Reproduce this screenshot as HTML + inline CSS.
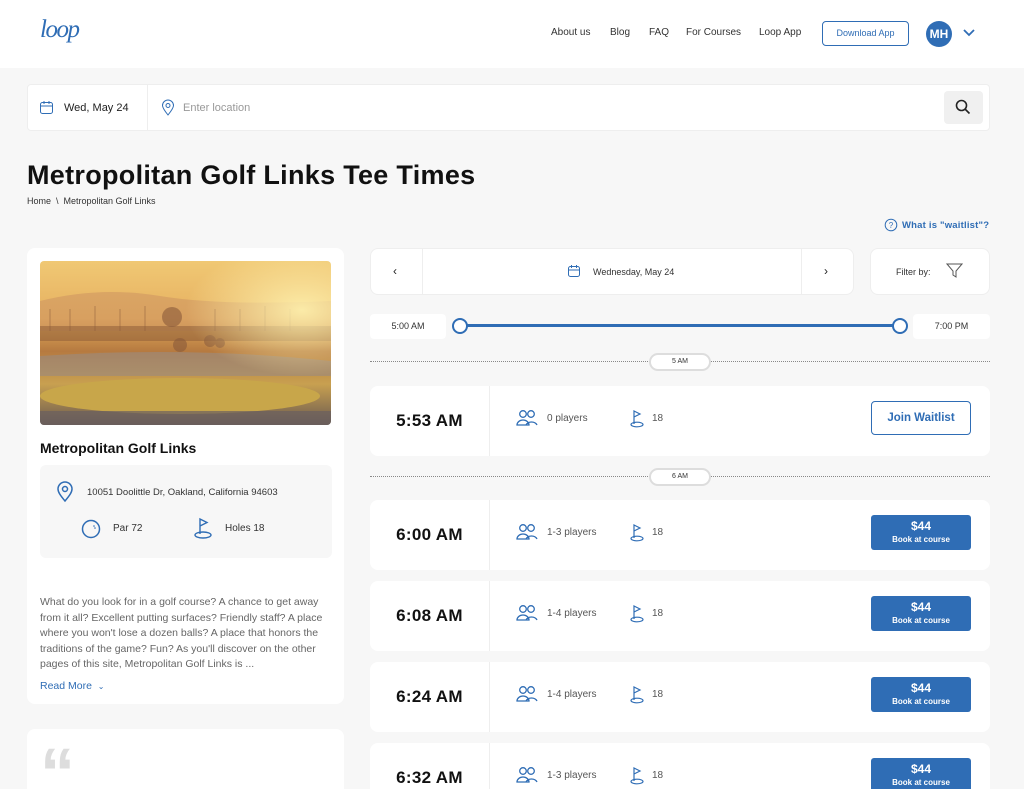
<!DOCTYPE html>
<html><head><meta charset="utf-8"><style>
*{box-sizing:border-box;margin:0;padding:0}
html,body{width:1024px;height:789px;overflow:hidden}
body{background:#f7f7f7;font-family:"Liberation Sans",sans-serif;color:#222;position:relative}
.abs{position:absolute}
.hdr{left:0;top:0;width:1024px;height:68px;background:#fff}
.nav{font-size:10px;color:#333;top:27px}
.card{background:#fff;border-radius:8px}
.blue{color:#2f6db5}
.row{left:370px;width:620px;height:70px;background:#fff;border-radius:8px}
.row .t{position:absolute;left:0;top:0;width:120px;height:70px;border-right:1px solid #eee;font-size:17px;font-weight:bold;color:#111;text-align:center;line-height:70px;letter-spacing:.3px}
.row .p{position:absolute;left:177px;top:27px;font-size:10px;color:#555}
.row .h{position:absolute;left:282px;top:27px;font-size:10px;color:#555}
.row .ic1{position:absolute;left:146px;top:23px}
.row .ic2{position:absolute;left:259px;top:23px}
.btn{position:absolute;left:501px;top:15px;width:100px;height:35px;background:#2f6db5;border-radius:3px;color:#fff;text-align:center}
.btn b{display:block;font-size:12px;margin-top:4px}
.btn span{display:block;font-size:8px;font-weight:bold;margin-top:2px}
.div{left:370px;width:620px;border-top:1.5px dotted #888}
.pill{width:62px;height:18px;border:2px solid #ddd;border-radius:9px;background:#fff;font-size:7px;text-align:center;line-height:14px;color:#333}
</style></head><body>
<div class="abs hdr"></div>
<div class="abs blue" style="left:40px;top:16px;font-family:'Liberation Serif',serif;font-style:italic;font-size:25px;letter-spacing:-1.5px">loop</div>
<div class="abs nav" style="left:551px">About us</div>
<div class="abs nav" style="left:610px">Blog</div>
<div class="abs nav" style="left:649px">FAQ</div>
<div class="abs nav" style="left:686px">For Courses</div>
<div class="abs nav" style="left:759px">Loop App</div>
<div class="abs blue" style="left:822px;top:21px;width:87px;height:25px;border:1px solid #2f6db5;border-radius:4px;font-size:9px;text-align:center;line-height:23px">Download App</div>
<div class="abs" style="left:926px;top:21px;width:26px;height:26px;border-radius:50%;background:#2f6db5;color:#fff;font-size:12px;font-weight:bold;text-align:center;line-height:26px">MH</div>
<svg class="abs" style="left:963px;top:29px" width="12" height="8"><path d="M1 1l5 5 5-5" stroke="#2f6db5" stroke-width="1.8" fill="none"/></svg>

<div class="abs card" style="left:27px;top:84px;width:963px;height:47px;border:1px solid #eee;border-radius:4px"></div>
<div class="abs" style="left:147px;top:85px;width:1px;height:45px;background:#eee"></div>
<svg class="abs" style="left:39px;top:100px" width="15" height="15"><rect x="1.5" y="2.5" width="12" height="11" rx="2" stroke="#2f6db5" fill="none"/><path d="M1.5 6h12M5 1v3M10 1v3" stroke="#2f6db5"/></svg>
<div class="abs" style="left:64px;top:102px;font-size:11px">Wed, May 24</div>
<svg class="abs" style="left:161px;top:99px" width="14" height="17"><path d="M7 16C3 11 1.5 8.5 1.5 6.5a5.5 5.5 0 0111 0C12.5 8.5 11 11 7 16z" stroke="#2f6db5" fill="none"/><circle cx="7" cy="6.5" r="2" stroke="#2f6db5" fill="none"/></svg>
<div class="abs" style="left:183px;top:102px;font-size:11px;color:#999">Enter location</div>
<div class="abs" style="left:944px;top:91px;width:39px;height:33px;background:#f0f0f0;border-radius:4px"></div>
<svg class="abs" style="left:955px;top:99px" width="16" height="16"><circle cx="6.5" cy="6.5" r="5" stroke="#222" stroke-width="1.6" fill="none"/><path d="M10 10l4.5 4.5" stroke="#222" stroke-width="1.6"/></svg>

<div class="abs" style="left:27px;top:160px;font-size:27px;font-weight:bold;color:#111;letter-spacing:.3px">Metropolitan Golf Links Tee Times</div>
<div class="abs" style="left:27px;top:196px;font-size:9px;color:#333">Home &nbsp;\ &nbsp;Metropolitan Golf Links</div>
<svg class="abs" style="left:884px;top:218px" width="14" height="14"><circle cx="7" cy="7" r="5.8" stroke="#2f6db5" fill="none"/><text x="7" y="10" font-size="8" fill="#2f6db5" text-anchor="middle" font-family="Liberation Sans">?</text></svg>
<div class="abs blue" style="left:902px;top:220px;font-size:9.5px;font-weight:bold;letter-spacing:.2px">What is "waitlist"?</div>

<div class="abs card" style="left:27px;top:248px;width:317px;height:456px"></div>
<svg class="abs" style="left:40px;top:261px;border-radius:4px" width="291" height="164" viewBox="0 0 291 164">
<defs><linearGradient id="s" x1="0" y1="0" x2="0" y2="1"><stop offset="0" stop-color="#f0c874"/><stop offset=".35" stop-color="#e6b060"/><stop offset=".55" stop-color="#b67a40"/><stop offset=".75" stop-color="#c8a050"/><stop offset="1" stop-color="#6a5a50"/></linearGradient>
<radialGradient id="r" cx=".9" cy=".3" r=".4"><stop offset="0" stop-color="#fff3b0" stop-opacity=".9"/><stop offset="1" stop-color="#fff3b0" stop-opacity="0"/></radialGradient></defs>
<rect width="291" height="164" fill="url(#s)"/>
<path d="M0 40Q60 25 120 35T291 40V70H0z" fill="#c99060" opacity=".5"/>
<path d="M0 65H291V80H0z" fill="#8a5a35" opacity=".5"/>
<g fill="#8a5a3a" opacity=".6"><circle cx="132" cy="56" r="10"/><circle cx="170" cy="80" r="6"/><circle cx="180" cy="82" r="5"/><circle cx="140" cy="84" r="7"/></g>
<g stroke="#8a5a3a" opacity=".5"><path d="M10 48V70M30 48V70M55 45V70M80 48V70M105 45V70M175 48V70M200 48V70M225 45V70M250 48V70"/></g>
<path d="M0 95Q150 85 291 100V115H0z" fill="#9a8a80" opacity=".6"/>
<ellipse cx="140" cy="135" rx="140" ry="18" fill="#c8a64a"/>
<path d="M0 150H291V164H0z" fill="#6a6060" opacity=".7"/>
<rect width="291" height="164" fill="url(#r)"/>
</svg>
<div class="abs" style="left:40px;top:440px;font-size:14px;font-weight:bold;color:#111">Metropolitan Golf Links</div>
<div class="abs" style="left:40px;top:465px;width:292px;height:93px;background:#f7f7f7;border-radius:6px"></div>
<svg class="abs" style="left:56px;top:481px" width="18" height="22"><path d="M9 20C4 14 2 11 2 8a7 7 0 0114 0c0 3-2 6-7 12z" stroke="#2f6db5" stroke-width="1.5" fill="none"/><circle cx="9" cy="8" r="2.5" stroke="#2f6db5" stroke-width="1.5" fill="none"/></svg>
<div class="abs" style="left:87px;top:487px;font-size:9.5px;color:#333">10051 Doolittle Dr, Oakland, California 94603</div>
<svg class="abs" style="left:81px;top:519px" width="20" height="20"><circle cx="10" cy="10" r="8.5" stroke="#2f6db5" stroke-width="1.5" fill="none"/><circle cx="13" cy="7" r=".8" fill="#2f6db5"/><circle cx="14" cy="9" r=".8" fill="#2f6db5"/></svg>
<div class="abs" style="left:113px;top:523px;font-size:10px;color:#333">Par 72</div>
<svg class="abs" style="left:193px;top:517px" width="20" height="22"><path d="M7 17V2l7 3.5-7 3.5" stroke="#2f6db5" stroke-width="1.4" fill="none"/><ellipse cx="10" cy="18" rx="8" ry="3" stroke="#2f6db5" stroke-width="1.4" fill="none"/></svg>
<div class="abs" style="left:225px;top:523px;font-size:10px;color:#333">Holes 18</div>
<div class="abs" style="left:40px;top:595px;width:292px;font-size:10.5px;line-height:15.5px;color:#666">What do you look for in a golf course? A chance to get away from it all? Excellent putting surfaces? Friendly staff? A place where you won't lose a dozen balls? A place that honors the traditions of the game? Fun? As you'll discover on the other pages of this site, Metropolitan Golf Links is ...</div>
<div class="abs blue" style="left:40px;top:680px;font-size:10.5px">Read More &nbsp;<span style="font-size:8px">⌄</span></div>
<div class="abs card" style="left:27px;top:729px;width:317px;height:80px"></div>
<div class="abs" style="left:40px;top:738px;font-size:70px;font-weight:bold;color:#ddd;line-height:70px">“</div>

<div class="abs card" style="left:370px;top:248px;width:484px;height:47px;border:1px solid #eee"></div>
<div class="abs" style="left:422px;top:249px;width:1px;height:45px;background:#eee"></div>
<div class="abs" style="left:801px;top:249px;width:1px;height:45px;background:#eee"></div>
<div class="abs" style="left:393px;top:264px;font-size:12px">‹</div>
<div class="abs" style="left:824px;top:264px;font-size:12px">›</div>
<svg class="abs" style="left:567px;top:264px" width="14" height="14"><rect x="1.5" y="2.5" width="11" height="10" rx="2" stroke="#2f6db5" fill="none"/><path d="M1.5 6h11M4.5 1v3M9.5 1v3" stroke="#2f6db5"/></svg>
<div class="abs" style="left:593px;top:267px;font-size:9px;color:#333">Wednesday, May 24</div>
<div class="abs card" style="left:870px;top:248px;width:120px;height:47px;border:1px solid #eee"></div>
<div class="abs" style="left:896px;top:267px;font-size:9px;color:#333">Filter by:</div>
<svg class="abs" style="left:946px;top:263px" width="17" height="16"><path d="M1 1h15l-6 7v6l-3-2V8z" stroke="#555" fill="none"/></svg>

<div class="abs card" style="left:370px;top:314px;width:76px;height:25px;border-radius:4px;font-size:9px;text-align:center;line-height:25px;color:#333">5:00 AM</div>
<div class="abs card" style="left:913px;top:314px;width:77px;height:25px;border-radius:4px;font-size:9px;text-align:center;line-height:25px;color:#333">7:00 PM</div>
<div class="abs" style="left:460px;top:324px;width:440px;height:3px;background:#2f6db5"></div>
<div class="abs" style="left:452px;top:318px;width:16px;height:16px;border-radius:50%;border:2.5px solid #2f6db5;background:#fff"></div>
<div class="abs" style="left:892px;top:318px;width:16px;height:16px;border-radius:50%;border:2.5px solid #2f6db5;background:#fff"></div>

<div class="abs div" style="top:361px"></div>
<div class="abs pill" style="left:649px;top:353px">5 AM</div>
<div class="abs row" style="top:386px"><div class="t">5:53 AM</div>
<svg class="ic1" width="22" height="18"><circle cx="7" cy="5" r="3.3" stroke="#2f6db5" stroke-width="1.3" fill="none"/><circle cx="15" cy="5" r="3.3" stroke="#2f6db5" stroke-width="1.3" fill="none"/><path d="M1 16a6 5 0 0112 0zM10 16a6 5 0 0111 0" stroke="#2f6db5" stroke-width="1.3" fill="none"/></svg>
<div class="p">0 players</div>
<svg class="ic2" width="16" height="19"><path d="M5 15V2l6 3-6 3" stroke="#2f6db5" stroke-width="1.2" fill="none"/><ellipse cx="8" cy="15.5" rx="6" ry="2.3" stroke="#2f6db5" stroke-width="1.2" fill="none"/></svg>
<div class="h">18</div>
<div class="abs blue" style="left:501px;top:15px;width:100px;height:34px;border:1px solid #2f6db5;border-radius:4px;font-size:11.5px;font-weight:bold;text-align:center;line-height:32px">Join Waitlist</div></div>

<div class="abs div" style="top:476px"></div>
<div class="abs pill" style="left:649px;top:468px">6 AM</div>

<div class="abs row" style="top:500px"><div class="t">6:00 AM</div>
<svg class="ic1" width="22" height="18"><circle cx="7" cy="5" r="3.3" stroke="#2f6db5" stroke-width="1.3" fill="none"/><circle cx="15" cy="5" r="3.3" stroke="#2f6db5" stroke-width="1.3" fill="none"/><path d="M1 16a6 5 0 0112 0zM10 16a6 5 0 0111 0" stroke="#2f6db5" stroke-width="1.3" fill="none"/></svg>
<div class="p">1-3 players</div>
<svg class="ic2" width="16" height="19"><path d="M5 15V2l6 3-6 3" stroke="#2f6db5" stroke-width="1.2" fill="none"/><ellipse cx="8" cy="15.5" rx="6" ry="2.3" stroke="#2f6db5" stroke-width="1.2" fill="none"/></svg>
<div class="h">18</div><div class="btn"><b>$44</b><span>Book at course</span></div></div>

<div class="abs row" style="top:581px"><div class="t">6:08 AM</div>
<svg class="ic1" width="22" height="18"><circle cx="7" cy="5" r="3.3" stroke="#2f6db5" stroke-width="1.3" fill="none"/><circle cx="15" cy="5" r="3.3" stroke="#2f6db5" stroke-width="1.3" fill="none"/><path d="M1 16a6 5 0 0112 0zM10 16a6 5 0 0111 0" stroke="#2f6db5" stroke-width="1.3" fill="none"/></svg>
<div class="p">1-4 players</div>
<svg class="ic2" width="16" height="19"><path d="M5 15V2l6 3-6 3" stroke="#2f6db5" stroke-width="1.2" fill="none"/><ellipse cx="8" cy="15.5" rx="6" ry="2.3" stroke="#2f6db5" stroke-width="1.2" fill="none"/></svg>
<div class="h">18</div><div class="btn"><b>$44</b><span>Book at course</span></div></div>

<div class="abs row" style="top:662px"><div class="t">6:24 AM</div>
<svg class="ic1" width="22" height="18"><circle cx="7" cy="5" r="3.3" stroke="#2f6db5" stroke-width="1.3" fill="none"/><circle cx="15" cy="5" r="3.3" stroke="#2f6db5" stroke-width="1.3" fill="none"/><path d="M1 16a6 5 0 0112 0zM10 16a6 5 0 0111 0" stroke="#2f6db5" stroke-width="1.3" fill="none"/></svg>
<div class="p">1-4 players</div>
<svg class="ic2" width="16" height="19"><path d="M5 15V2l6 3-6 3" stroke="#2f6db5" stroke-width="1.2" fill="none"/><ellipse cx="8" cy="15.5" rx="6" ry="2.3" stroke="#2f6db5" stroke-width="1.2" fill="none"/></svg>
<div class="h">18</div><div class="btn"><b>$44</b><span>Book at course</span></div></div>

<div class="abs row" style="top:743px"><div class="t">6:32 AM</div>
<svg class="ic1" width="22" height="18"><circle cx="7" cy="5" r="3.3" stroke="#2f6db5" stroke-width="1.3" fill="none"/><circle cx="15" cy="5" r="3.3" stroke="#2f6db5" stroke-width="1.3" fill="none"/><path d="M1 16a6 5 0 0112 0zM10 16a6 5 0 0111 0" stroke="#2f6db5" stroke-width="1.3" fill="none"/></svg>
<div class="p">1-3 players</div>
<svg class="ic2" width="16" height="19"><path d="M5 15V2l6 3-6 3" stroke="#2f6db5" stroke-width="1.2" fill="none"/><ellipse cx="8" cy="15.5" rx="6" ry="2.3" stroke="#2f6db5" stroke-width="1.2" fill="none"/></svg>
<div class="h">18</div><div class="btn"><b>$44</b><span>Book at course</span></div></div>
</body></html>
